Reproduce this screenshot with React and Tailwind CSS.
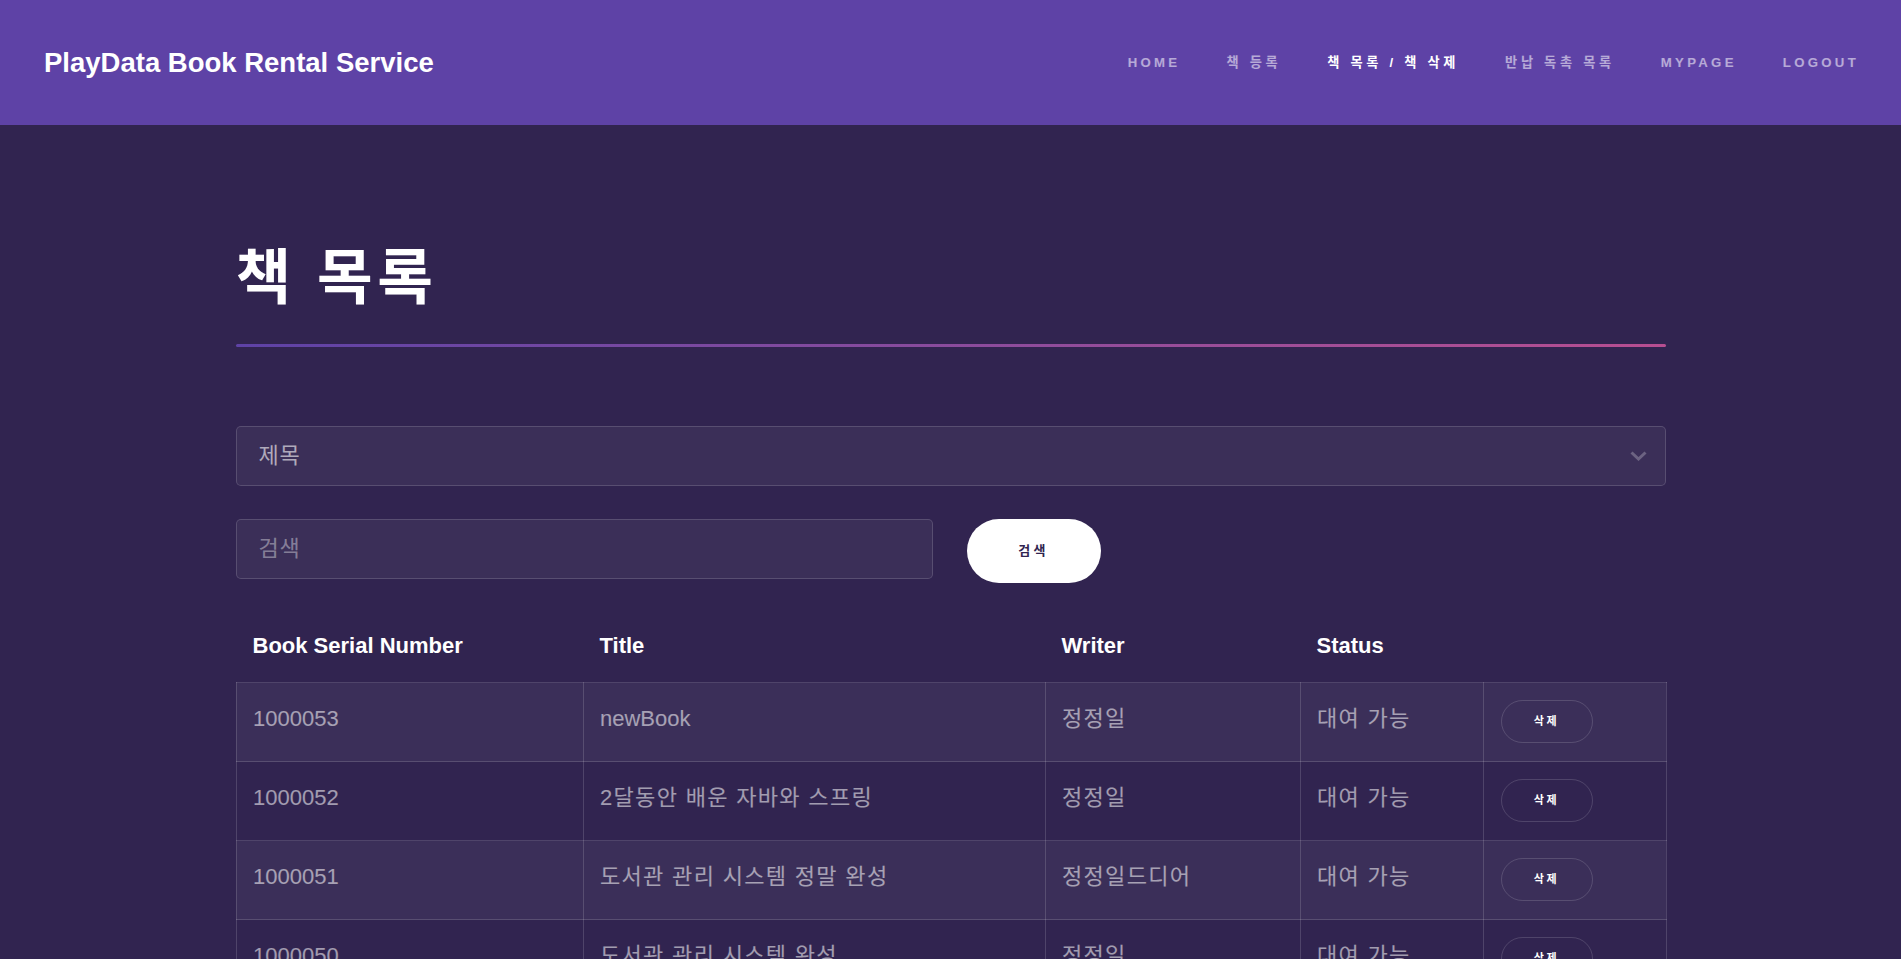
const navItems = [
  { label: "Home", active: false },
  { label: "책 등록", active: false },
  { label: "책 목록 / 책 삭제", active: true },
  { label: "반납 독촉 목록", active: false },
  { label: "MyPage", active: false },
  { label: "Logout", active: false },
];

const books = [
  { id: "1000053", title: "newBook", writer: "정정일", status: "대여 가능" },
  { id: "1000052", title: "2달동안 배운 자바와 스프링", writer: "정정일", status: "대여 가능" },
  { id: "1000051", title: "도서관 관리 시스템 정말 완성", writer: "정정일드디어", status: "대여 가능" },
  { id: "1000050", title: "도서관 관리 시스템 완성", writer: "정정일", status: "대여 가능" },
];

// hangul in the reference renders a little wider than Noto CJK, so widen it
const isKo = (s) => /[가-힣]/.test(s);

function Cell({ children }) {
  return (
    <td
      className={`border border-white/15 align-top h-[79px] px-[16.5px] pt-[16.5px] leading-[38.5px] ${
        isKo(children) ? "tracking-[0.06em]" : ""
      }`}
    >
      {children}
    </td>
  );
}

export default function App() {
  return (
    <div className="min-h-screen bg-[#312450] font-['Liberation_Sans','Noto_Sans_CJK_KR',sans-serif] text-white/55">
      {/* header */}
      <header className="h-[125px] bg-[#5e42a6] flex items-center justify-between pl-[44px] pr-[42px]">
        <h1 className="text-[27.5px] font-bold text-white">PlayData Book Rental Service</h1>
        <nav className="flex items-center gap-[46px]">
          {navItems.map((item) => (
            <a
              key={item.label}
              href="#"
              className={`text-[13.2px] font-bold uppercase ${
                isKo(item.label) ? "tracking-[0.28em]" : "tracking-[0.25em]"
              } ${item.active ? "text-white" : "text-white/55"}`}
            >
              {item.label}
            </a>
          ))}
        </nav>
      </header>

      {/* main */}
      <main className="w-[1430px] mx-auto pt-[114px] pb-[80px]">
        <h2 className="text-[60.5px] font-bold leading-[1.3] tracking-[0.075em] text-white">책 목록</h2>
        <div className="mt-[26px] h-[3px] rounded-full bg-gradient-to-r from-[#5e42a6] to-[#b74e91]" />

        {/* search type */}
        <div className="mt-[79px] relative h-[60px] rounded-[5px] border border-white/15 bg-white/5 flex items-center px-[22px]">
          <span className="text-[22px] tracking-[0.03em] text-white/60">제목</span>
          <svg
            className="absolute right-[18px] top-1/2 -translate-y-1/2"
            width="17"
            height="10"
            viewBox="0 0 17 10"
            fill="none"
          >
            <polyline points="1.5,1.5 8.5,8 15.5,1.5" stroke="rgba(255,255,255,0.25)" strokeWidth="3" />
          </svg>
        </div>

        {/* search input */}
        <div className="mt-[33px] flex items-start gap-[34px]">
          <div className="w-[697px] h-[60px] rounded-[5px] border border-white/15 bg-white/5 flex items-center px-[22px]">
            <span className="text-[22px] tracking-[0.03em] text-white/40">검색</span>
          </div>
          <button className="w-[134px] h-[64px] rounded-full bg-white text-[#312450] text-[13px] font-bold tracking-[0.25em]">
            검색
          </button>
        </div>

        {/* table */}
        <table className="mt-[28px] w-full table-fixed border-collapse text-[22px]">
          <colgroup>
            <col className="w-[347px]" />
            <col className="w-[462px]" />
            <col className="w-[255px]" />
            <col className="w-[183px]" />
            <col className="w-[183px]" />
          </colgroup>
          <thead>
            <tr>
              <th className="text-left font-bold text-white px-[16.5px] py-[16.5px] leading-[38.5px]">Book Serial Number</th>
              <th className="text-left font-bold text-white px-[16.5px] py-[16.5px] leading-[38.5px]">Title</th>
              <th className="text-left font-bold text-white px-[16.5px] py-[16.5px] leading-[38.5px]">Writer</th>
              <th className="text-left font-bold text-white px-[16.5px] py-[16.5px] leading-[38.5px]">Status</th>
              <th />
            </tr>
          </thead>
          <tbody>
            {books.map((b, i) => (
              <tr key={b.id} className={i % 2 === 0 ? "bg-white/5" : ""}>
                <Cell>{b.id}</Cell>
                <Cell>{b.title}</Cell>
                <Cell>{b.writer}</Cell>
                <Cell>{b.status}</Cell>
                <td className="border border-white/15 align-top h-[79px] px-[17px] pt-[17px]">
                  <button className="block w-[92px] h-[43px] rounded-full border border-white/15 text-[11px] font-bold tracking-[0.25em] text-white">
                    삭제
                  </button>
                </td>
              </tr>
            ))}
          </tbody>
        </table>
      </main>
    </div>
  );
}
